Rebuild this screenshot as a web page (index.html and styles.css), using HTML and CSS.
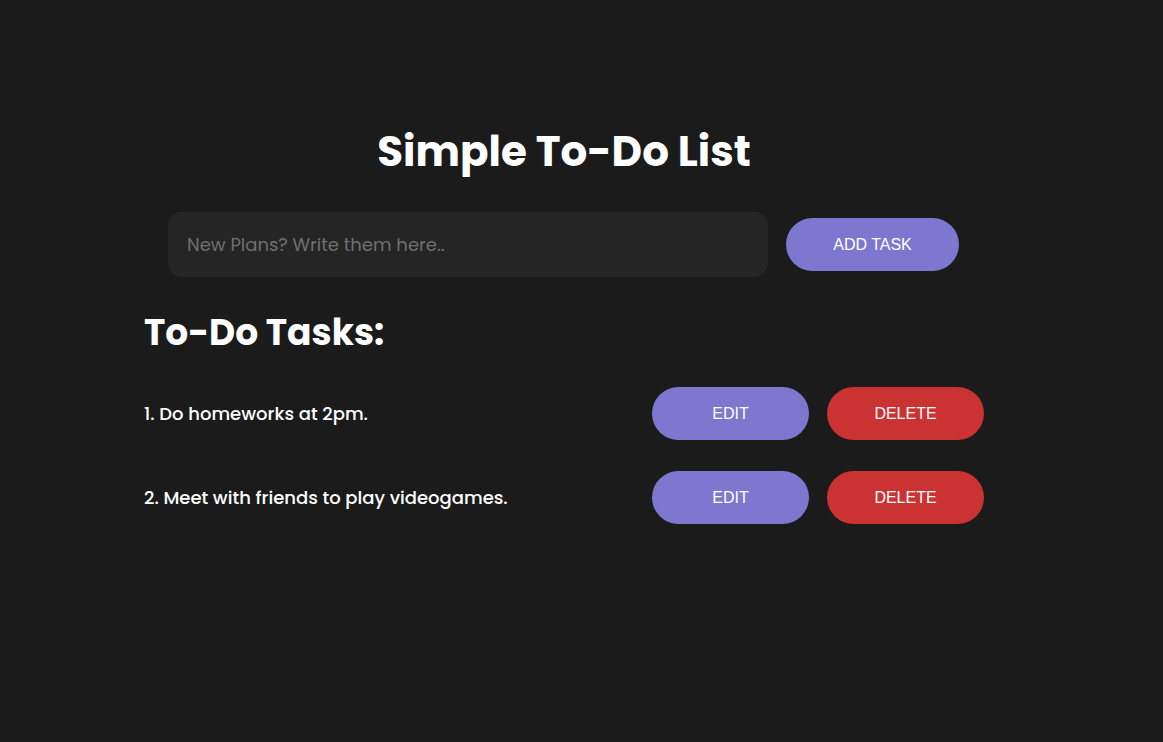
FILE: index.html
```html
<!DOCTYPE html>
<html lang="en">
<head>
<meta charset="utf-8">
<title>Simple To-Do List</title>
<link rel="stylesheet" href="styles.css">
</head>
<body>
<main class="container">
  <h1 class="title">Simple To-Do List</h1>
  <form class="add-form">
    <input class="task-input" type="text" placeholder="New Plans? Write them here..">
    <button class="btn btn-purple btn-add" type="button">ADD TASK</button>
  </form>
  <h2 class="subtitle">To-Do Tasks:</h2>
  <ul class="task-list">
    <li class="task">
      <span class="task-text">1. Do homeworks at 2pm.</span>
      <div class="task-actions">
        <button class="btn btn-purple" type="button">EDIT</button>
        <button class="btn btn-red" type="button">DELETE</button>
      </div>
    </li>
    <li class="task">
      <span class="task-text">2. Meet with friends to play videogames.</span>
      <div class="task-actions">
        <button class="btn btn-purple" type="button">EDIT</button>
        <button class="btn btn-red" type="button">DELETE</button>
      </div>
    </li>
  </ul>
</main>
</body>
</html>
```

FILE: styles.css
```css
* { box-sizing: border-box; }
html, body {
  margin: 0;
  padding: 0;
  background: #1b1b1b;
  color: #ffffff;
  font-family: "Poppins", "Open Sans", "Noto Sans", sans-serif;
  height: 100%;
}
.container {
  width: 840px;
  margin-left: 144px;
  padding-top: 126px;
}
.title {
  margin: 0;
  text-align: center;
  font-size: 42px;
  font-weight: 700;
  line-height: 52px;
}
.add-form {
  display: flex;
  align-items: center;
  justify-content: center;
  gap: 18px;
  margin-top: 34px;
  padding-right: 1px;
}
.task-input {
  width: 600px;
  height: 65px;
  border: none;
  border-radius: 14px;
  background: #252525;
  color: #ddd;
  padding: 0 19px;
  font-family: inherit;
  font-size: 18px;
  outline: none;
}
.task-input::placeholder { color: #707070; }
.btn {
  height: 53px;
  border: none;
  border-radius: 27px;
  color: #fff;
  font-family: "Liberation Sans", Arial, sans-serif;
  font-size: 16px;
  cursor: pointer;
}
.btn-add { width: 173px; }
.btn-purple { background: #7e77d0; }
.btn-red { background: #cb3333; }
.subtitle {
  margin: 26px 0 0;
  font-size: 36px;
  font-weight: 700;
  line-height: 60px;
}
.task-list {
  list-style: none;
  margin: 24px 0 0;
  padding: 0;
  display: flex;
  flex-direction: column;
  gap: 31px;
}
.task {
  display: flex;
  align-items: center;
  justify-content: space-between;
}
.task-text {
  font-size: 18px;
  font-weight: 500;
}
.task-actions {
  display: flex;
  gap: 18px;
}
.task-actions .btn { width: 157px; }
```
